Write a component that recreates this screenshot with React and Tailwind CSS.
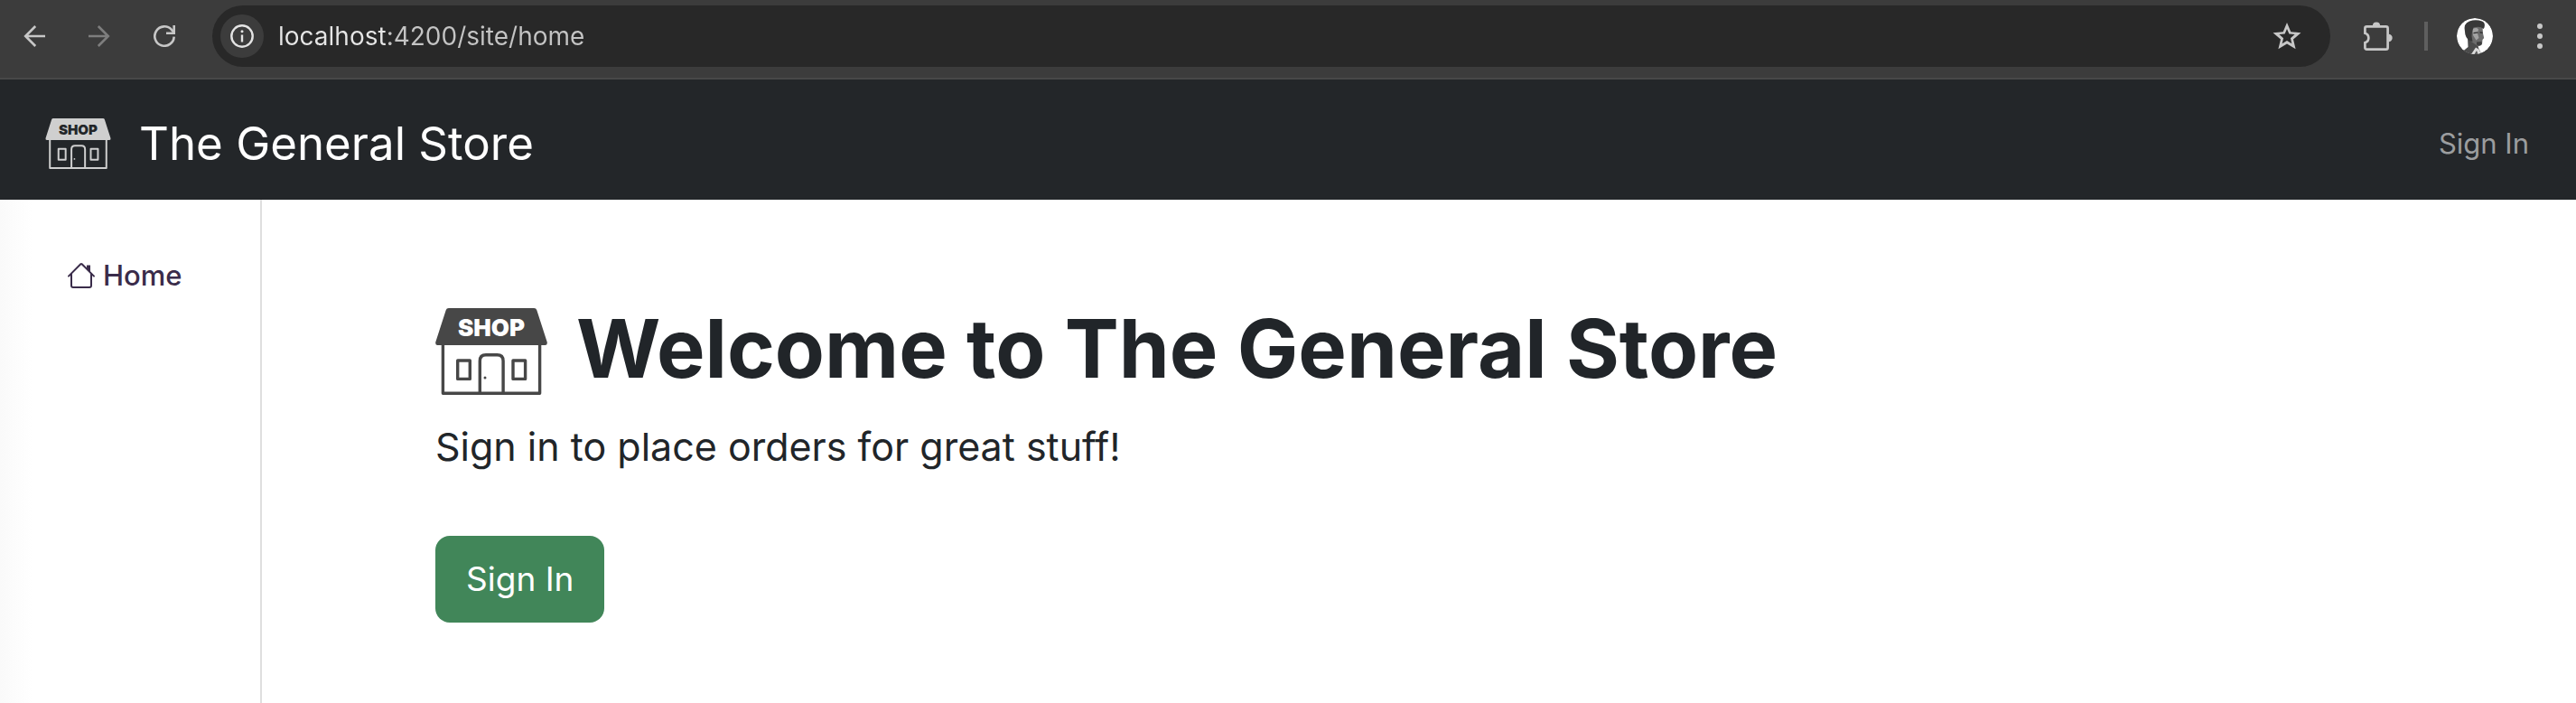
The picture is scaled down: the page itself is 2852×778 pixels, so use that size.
function ArrowIcon({ className }) {
  return (
    <svg viewBox="0 0 24 24" className={className} fill="none" stroke="currentColor" strokeWidth="2.6" aria-hidden="true">
      <path d="M13.2 1 2.2 12l11 11M2 12h22" strokeLinejoin="miter" />
    </svg>
  );
}

function ReloadIcon() {
  return (
    <svg viewBox="0 0 24 24" className="size-6" fill="none" stroke="currentColor" strokeWidth="2.6" aria-hidden="true">
      <path d="M22.7 12.6A10.7 10.7 0 1 1 20 4.9l2.5 3" />
      <path d="M22.7 0v8.8H14" />
    </svg>
  );
}

function InfoIcon() {
  return (
    <svg viewBox="0 0 26 26" className="size-[26px]" fill="none" stroke="currentColor" strokeWidth="2.4" aria-hidden="true">
      <circle cx="13" cy="13" r="11.7" />
      <path d="M13 11.5v8" />
      <circle cx="13" cy="7.8" r="1.5" fill="currentColor" stroke="none" />
    </svg>
  );
}

function StarIcon() {
  return (
    <svg viewBox="0 0 32 30" className="h-[30px] w-8" fill="currentColor" fillRule="evenodd" aria-hidden="true">
      <path d="M16 0l4.3 10.2 11.2 1-8.5 7.3 2.6 10.8L16 23.6l-9.6 5.7L9 18.5.5 11.2l11.2-1zM16 6.9l-2.4 5.7-6.2.5 4.7 4.1-1.4 6 5.3-3.2 5.3 3.2-1.4-6 4.7-4.1-6.2-.5z" />
    </svg>
  );
}

function PuzzleIcon() {
  return (
    <svg viewBox="0 0 32 32" className="size-8" fill="none" aria-hidden="true">
      <path
        d="M1.4 12.8V7.2Q1.4 5.3 3.3 5.3H24.7Q26.6 5.3 26.6 7.2V28.7Q26.6 30.6 24.7 30.6H3.3Q1.4 30.6 1.4 28.7V23.2A5.4 5.4 0 0 0 1.4 12.8Z"
        stroke="currentColor"
        strokeWidth="2.7"
      />
      <path d="M9.9 4.5a4.1 4.1 0 0 1 8.2 0zM27.5 13.8a4.2 4.2 0 0 1 0 8.4z" fill="currentColor" />
    </svg>
  );
}

function MoreIcon() {
  return (
    <svg viewBox="0 0 6 28" className="h-7 w-[6px]" fill="currentColor" aria-hidden="true">
      <circle cx="3" cy="3" r="3" />
      <circle cx="3" cy="14" r="3" />
      <circle cx="3" cy="25" r="3" />
    </svg>
  );
}

function Avatar() {
  return (
    <svg viewBox="0 0 40 40" className="size-10 rounded-full" aria-hidden="true">
      <circle cx="20" cy="20" r="20" fill="#fff" />
      <path d="M12 22 12.5 32 7 36.5Q13 40.5 20 40.5L27 39 24 33 23 26z" fill="#4b4b4b" />
      <path d="M16 40 21 32.5 24.5 34.5 27 39.5 21 40z" fill="#dcdcdc" />
      <path d="M19.5 40 22 36 23.5 40z" fill="#555" />
      <path d="M13 11Q20 7 28.5 10L29 17 30.2 22 28.5 24 28 29Q25.5 32 22.5 30.5L16 26 12 20z" fill="#6b6b6b" />
      <path d="M17.5 12Q22 10 24 12.5L23 17 24.5 22 21.5 24.5 18 19z" fill="#a3a3a3" />
      <path d="M18.5 16.6 23.5 15.9M25.6 15.7 28.6 16.4" stroke="#2e2e2e" strokeWidth="1.4" />
      <path d="M22 26.5 27.5 25.9 27.7 29Q25 31.5 22 29.5z" fill="#3e3e3e" />
      <path d="M9 15Q7 6 14 3.5 21 1 28 3.5 32 5 30.5 10.5L29.5 12Q26 8.5 18.5 10.5L17 15 16.5 20 17.5 26 14 25Q9 21 9 15z" fill="#383838" />
    </svg>
  );
}

function ShopLogo({ className, signText }) {
  return (
    <svg viewBox="0 0 124 96" className={className} role="img" aria-label="Shop">
      <path
        d="M14.8 0H109.2Q111.6 0 112.3 2.3L123.7 37.5Q124.3 41 121.5 41H2.5Q-.3 41 .3 37.5L11.7 2.3Q12.4 0 14.8 0Z"
        fill="currentColor"
      />
      <g fill="none" stroke="currentColor" strokeWidth="3.4" strokeLinejoin="round">
        <path d="M8.4 40V94.2H115.6V40" />
        <rect x="24.7" y="58" width="13.6" height="20.4" />
        <rect x="86" y="58" width="13.6" height="20.4" />
        <path d="M49.3 94V58.5Q49.3 51.8 56 51.8H68.4Q75.1 51.8 75.1 58.5V94" />
      </g>
      <circle cx="55" cy="77" r="1.5" fill="currentColor" />
      <text x="62" y="31" textAnchor="middle" className={signText}>
        SHOP
      </text>
    </svg>
  );
}

function HouseIcon() {
  return (
    <svg viewBox="0 0 32 32" className="size-8 shrink-0" fill="none" stroke="currentColor" strokeWidth="2" strokeLinecap="round" strokeLinejoin="round" aria-hidden="true">
      <path d="M2 16.6 15.3 3.3Q16 2.6 16.7 3.3L30 16.6" />
      <path d="M5 14.5V27Q5 29 7 29H25Q27 29 27 27V14.5" />
      <path d="M22 4.5H26V12.5L22 8.5Z" fill="currentColor" stroke="none" />
    </svg>
  );
}

function BarButton({ label, className = "", children }) {
  return (
    <button type="button" aria-label={label} className={`flex size-12 shrink-0 items-center justify-center rounded-full ${className}`}>
      {children}
    </button>
  );
}

function BrowserBar() {
  return (
    <div className="flex items-center border-b-2 border-[#484848] bg-[#3c3c3c] pt-[6px] pr-4 pb-3 pl-[14px] text-[#c7c7c7]">
      <div className="flex gap-6">
        <BarButton label="Back">
          <ArrowIcon className="size-6" />
        </BarButton>
        <BarButton label="Forward" className="text-[#7e7e7e]">
          <ArrowIcon className="size-6 rotate-180" />
        </BarButton>
        <BarButton label="Reload">
          <ReloadIcon />
        </BarButton>
      </div>
      <div className="mx-[29px] flex h-[68px] flex-1 items-center rounded-full bg-[#282828] pr-6 pl-[9px]">
        <BarButton label="Site information" className="bg-[#3c3c3c] text-[#e3e3e3]">
          <InfoIcon />
        </BarButton>
        <input
          type="text"
          aria-label="Address"
          defaultValue="localhost:4200/site/home"
          className="ml-4 h-12 min-w-0 flex-1 bg-linear-to-r from-[#e6e6e6] from-[119px] to-[#c4c4c4] to-[119px] bg-clip-text text-[28px] text-transparent caret-[#e6e6e6] outline-none"
        />
        <BarButton label="Bookmark this page">
          <StarIcon />
        </BarButton>
      </div>
      <BarButton label="Extensions">
        <PuzzleIcon />
      </BarButton>
      <div className="ml-[27px] h-8 w-1 bg-[#5f5f5f]" />
      <button type="button" aria-label="Profile" className="mr-7 ml-8 shrink-0">
        <Avatar />
      </button>
      <BarButton label="More">
        <MoreIcon />
      </BarButton>
    </div>
  );
}

export default function App() {
  return (
    <div className="flex min-h-screen flex-col bg-white font-['Inter',sans-serif] text-[#212529]">
      <BrowserBar />
      <header className="flex items-center justify-between bg-[#232629] pt-8 pr-[52px] pb-6 pl-[50px]">
        <a href="#home" className="flex items-center gap-[31px] text-white">
          <ShopLogo className="h-14 w-[73px] text-[#cfcfcf]" signText="fill-[#232629] text-[26px] font-black" />
          <span className="text-[51px] leading-[77px]">The General Store</span>
        </a>
        <a href="#signin" className="text-[31px] leading-12 text-[#9b9d9f]">
          Sign In
        </a>
      </header>
      <div className="flex flex-1">
        <nav className="w-[290px] shrink-0 border-r-2 border-[#dfdfdf] bg-linear-to-r from-[#fafafa] to-white to-[36px] pt-[60px] pl-[74px]">
          <a href="#home" className="flex items-center gap-2 text-[31px] leading-12 font-medium text-[#3a2c4a]">
            <HouseIcon />
            Home
          </a>
        </nav>
        <main className="flex flex-1 flex-col items-start pt-[120px] pl-48">
          <div className="flex gap-8">
            <ShopLogo className="h-24 w-[124px] text-[#474747]" signText="fill-white text-[26px] font-black" />
            <h1 className="text-[90px] leading-[90px] font-bold">Welcome to The General Store</h1>
          </div>
          <p className="mt-6 text-[43px] leading-[66px]">Sign in to place orders for great stuff!</p>
          <button type="button" className="mt-[66px] h-24 rounded-2xl bg-[#418659] px-[34px] text-[37px] text-white">
            Sign In
          </button>
        </main>
      </div>
    </div>
  );
}
